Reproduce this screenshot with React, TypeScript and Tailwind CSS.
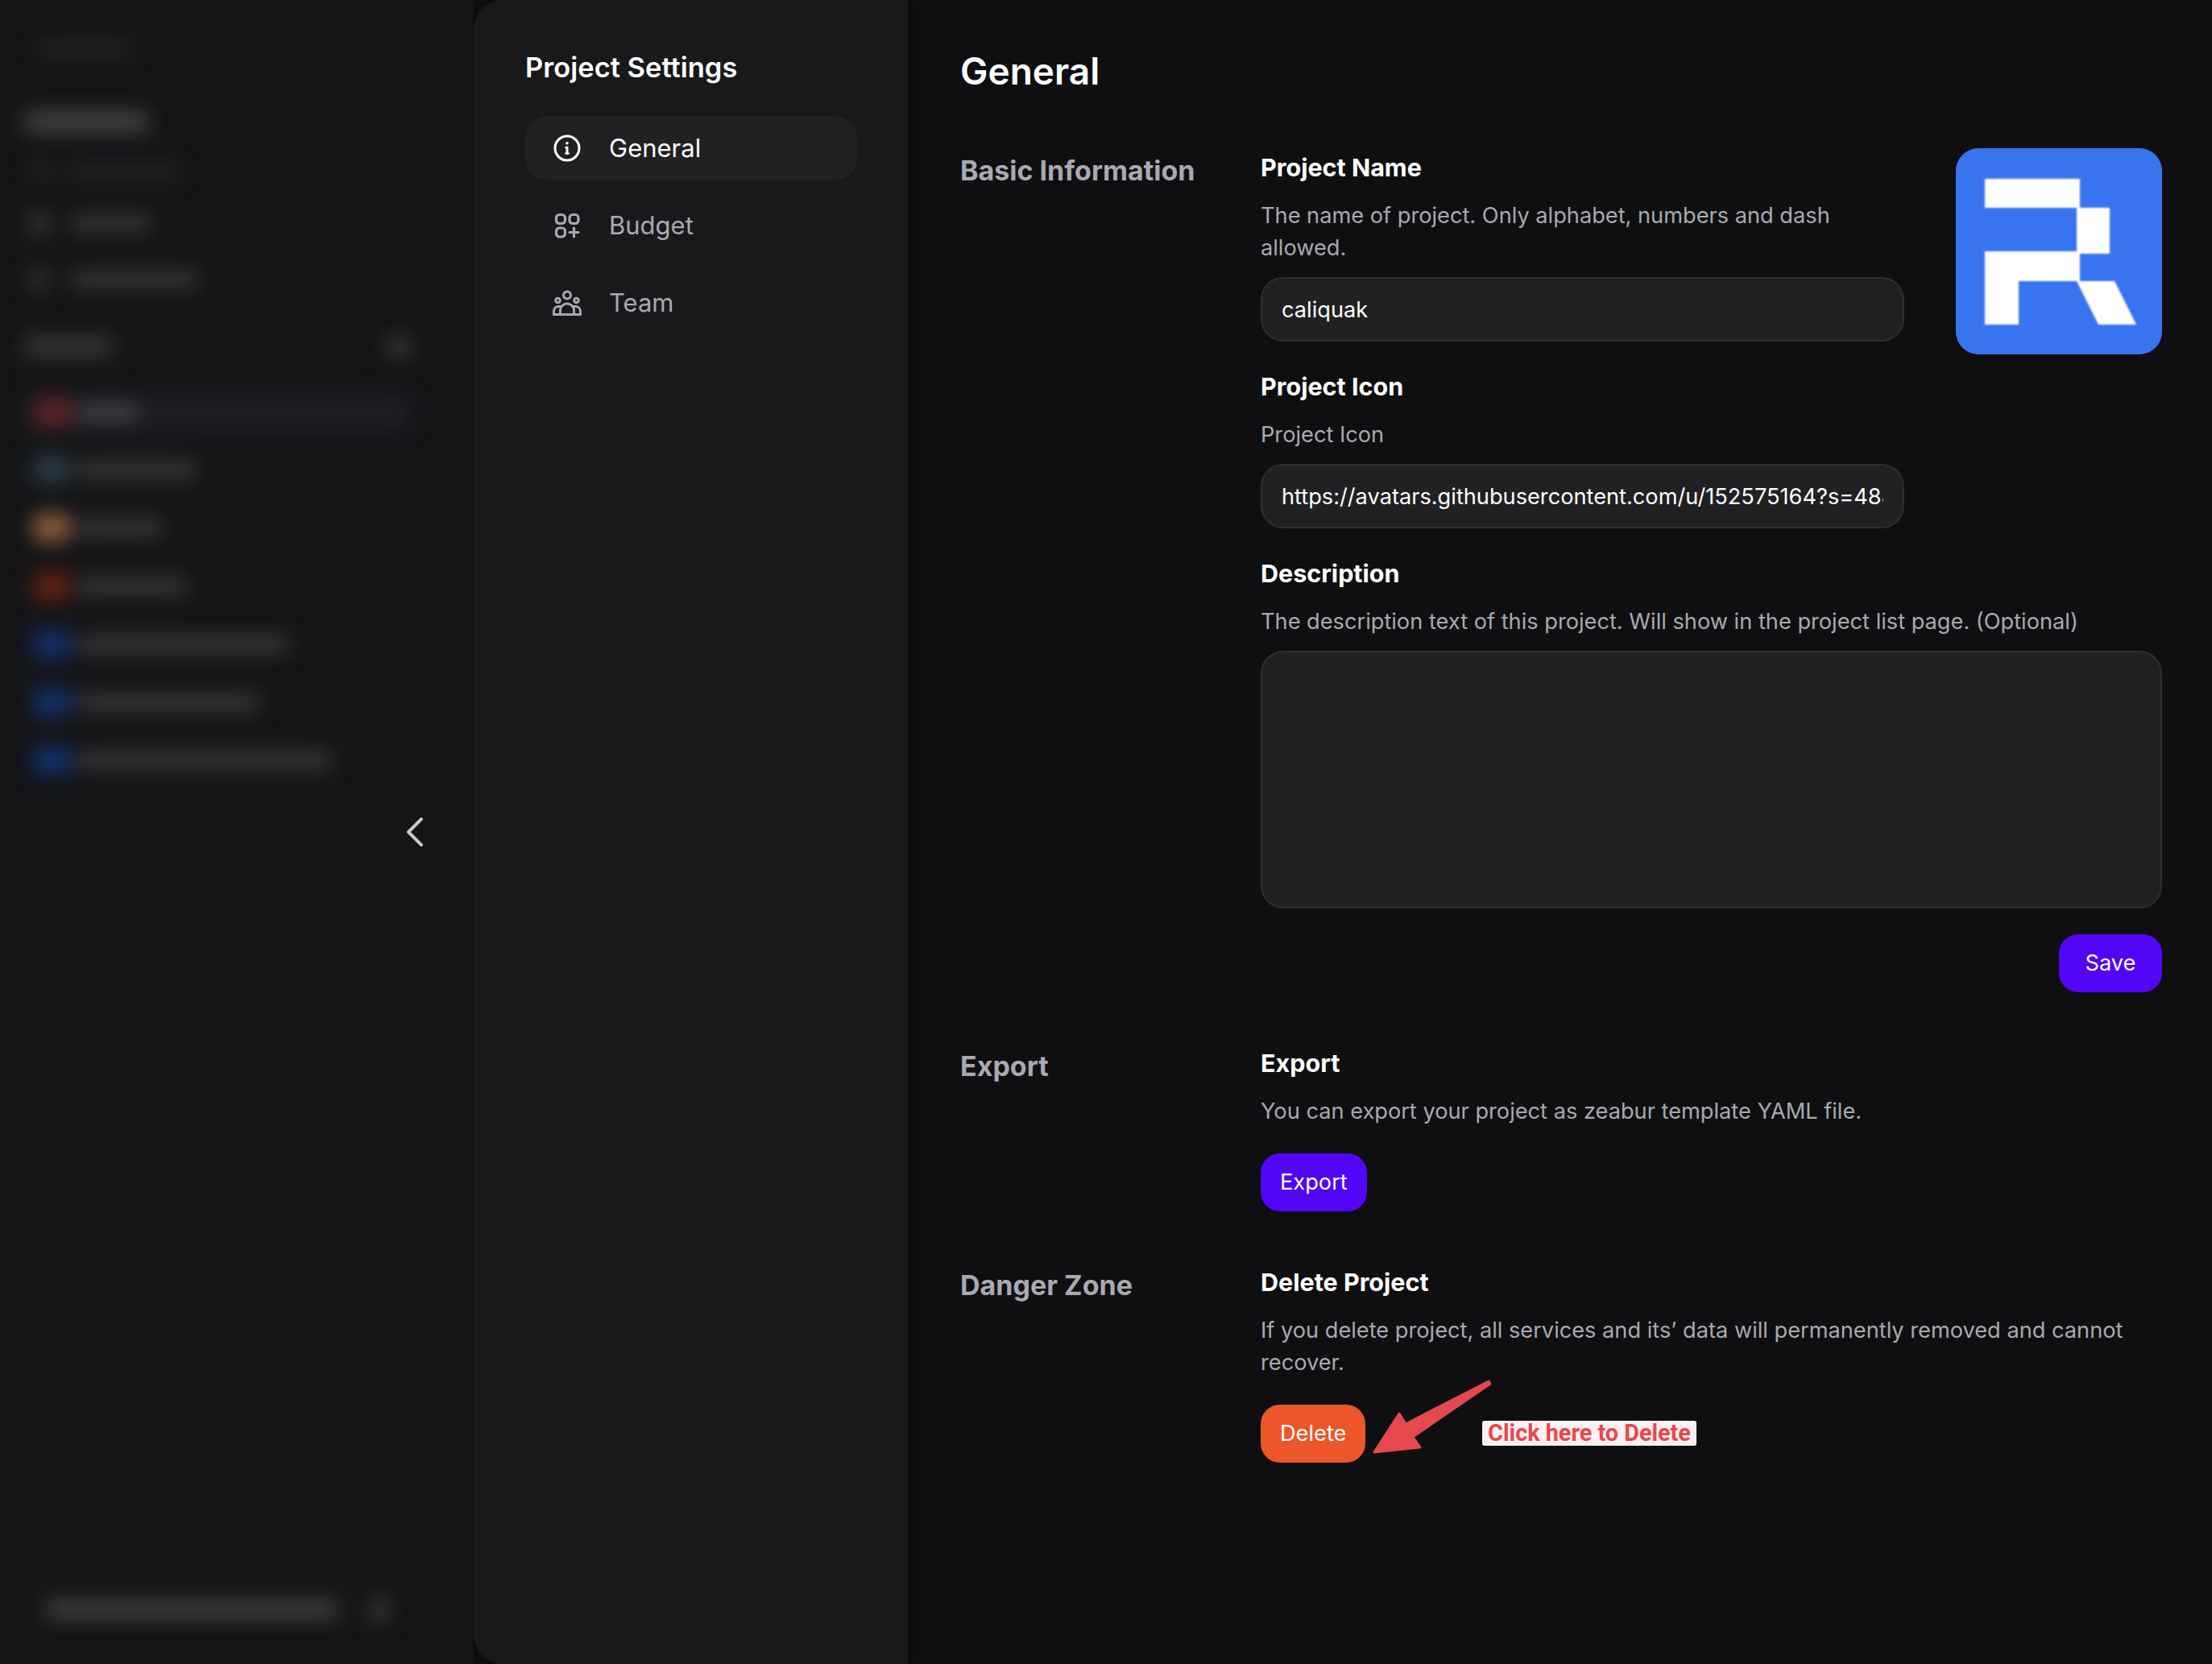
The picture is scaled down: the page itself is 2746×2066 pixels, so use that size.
import React from "react";

const font = { fontFamily: "Inter, 'Liberation Sans', sans-serif" };

function Row({ icon, text, w, cls = "", mt }: { icon: string; text: string; w: string; cls?: string; mt: string }) {
  return (
    <div className={`flex items-center gap-[8px] pl-[40px] ${mt} ${cls}`}>
      <div className={`h-[36px] w-[48px] rounded-[10px] ${icon}`} />
      <div className={`h-[24px] rounded-[6px] ${text} ${w}`} />
    </div>
  );
}

function Sidebar() {
  return (
    <div className="relative h-full w-[588px] shrink-0 bg-[#131416]">
      <div className="flex h-full flex-col pb-[52px] blur-[12px]">
        <div className="ml-[46px] mt-[52px] h-[16px] w-[118px] rounded-[4px] bg-[#272728]" />
        <div className="ml-[30px] mt-[69px] h-[28px] w-[155px] rounded-[4px] bg-[#404042]" />
        <div className="ml-[40px] mt-[38px] flex items-center gap-[20px]">
          <div className="h-[20px] w-[24px] rounded-[4px] bg-[#2c2522]" />
          <div className="h-[16px] w-[140px] rounded-[4px] bg-[#262628]" />
        </div>
        <div className="ml-[36px] mt-[40px] flex items-center gap-[26px]">
          <div className="h-[28px] w-[26px] rounded-[4px] bg-[#363637]" />
          <div className="h-[22px] w-[100px] rounded-[4px] bg-[#363638]" />
        </div>
        <div className="ml-[36px] mt-[43px] flex items-center gap-[28px]">
          <div className="h-[26px] w-[24px] rounded-[4px] bg-[#323234]" />
          <div className="h-[22px] w-[158px] rounded-[4px] bg-[#363638]" />
        </div>
        <div className="ml-[30px] mr-[78px] mt-[56px] flex items-center justify-between">
          <div className="h-[26px] w-[110px] rounded-[4px] bg-[#363638]" />
          <div className="h-[28px] w-[30px] rounded-[6px] bg-[#363638]" />
        </div>
        <div className="mx-[34px] mt-[45px] flex h-[46px] w-[476px] items-center gap-[8px] rounded-[8px] bg-[#1e1e24] pl-[8px]">
          <div className="h-[36px] w-[48px] rounded-[10px] bg-[#5e2327]" />
          <div className="h-[24px] w-[72px] rounded-[6px] bg-[#3e3e44]" />
        </div>
        <Row mt="mt-[30px]" icon="bg-[#2a3a46]" text="bg-[#363638]" w="w-[148px]" />
        <Row mt="mt-[36px]" icon="bg-[#8a5a3c]" text="bg-[#363638]" w="w-[106px]" />
        <Row mt="mt-[37px]" icon="bg-[#5f2210]" text="bg-[#363638]" w="w-[136px]" />
        <Row mt="mt-[36px]" icon="bg-[#13306a]" text="bg-[#363638]" w="w-[262px]" />
        <Row mt="mt-[36px]" icon="bg-[#13306a]" text="bg-[#363638]" w="w-[226px]" />
        <Row mt="mt-[36px]" icon="bg-[#13306a]" text="bg-[#363638]" w="w-[316px]" />
        <div className="ml-[56px] mt-auto flex items-center gap-[38px]">
          <div className="h-[28px] w-[364px] rounded-[6px] bg-[#3b3b3d]" />
          <div className="h-[32px] w-[26px] rounded-[6px] bg-[#343436]" />
        </div>
      </div>
      <svg className="absolute left-[502px] top-[1015px]" width="26" height="36" viewBox="0 0 26 36" fill="none">
        <path d="M21 2 5 18l16 16" stroke="#c9c9ce" strokeWidth="4" strokeLinecap="round" strokeLinejoin="round" />
      </svg>
    </div>
  );
}

function NavItem({ active, icon, label }: { active?: boolean; icon: React.ReactNode; label: string }) {
  return (
    <div className={`flex h-[80px] items-center gap-[34px] rounded-[28px] pl-[34px] ${active ? "bg-[#212123] text-white" : "text-[#a9a9b2]"}`}>
      <div className="h-[36px] w-[36px] shrink-0">{icon}</div>
      <span className="text-[31px] leading-[40px]">{label}</span>
    </div>
  );
}

const InfoIcon = (
  <svg width="36" height="36" viewBox="0 0 36 36" fill="none" stroke="currentColor" strokeWidth="3" strokeLinecap="round">
    <circle cx="18" cy="18" r="15" />
    <path d="M18 17v7.5" strokeWidth="3" />
    <circle cx="18" cy="11.8" r="1.8" fill="currentColor" stroke="none" />
    <path d="M16 17h2M16 24.5h4" strokeWidth="2" />
  </svg>
);

const BudgetIcon = (
  <svg width="36" height="36" viewBox="0 0 36 36" fill="none" stroke="currentColor" strokeWidth="3.2" strokeLinecap="round">
    <rect x="4.5" y="4.5" width="11" height="11" rx="4" />
    <rect x="21" y="4.5" width="11" height="11" rx="4" />
    <rect x="4.5" y="21" width="11" height="11" rx="4" />
    <path d="M26.5 21v11M21 26.5h11" />
  </svg>
);

const TeamIcon = (
  <svg width="36" height="36" viewBox="0 0 36 36" fill="none" stroke="currentColor" strokeWidth="3" strokeLinecap="round" strokeLinejoin="round">
    <circle cx="18" cy="8.5" r="4.5" />
    <circle cx="6.5" cy="15" r="2.8" />
    <circle cx="29.5" cy="15" r="2.8" />
    <path d="M1.5 32.5v-4.5a6 6 0 0 1 6-5.5h3M34.5 32.5v-4.5a6 6 0 0 0-6-5.5h-3" />
    <path d="M9.5 32.5v-5a8.5 8.5 0 0 1 17 0v5" />
    <path d="M1.5 32.5h33" />
  </svg>
);

function SettingsNav() {
  return (
    <div className="h-full w-[539px] shrink-0 rounded-l-[36px] bg-[#19191b] px-[64px] shadow-[-14px_0_24px_rgba(0,0,0,0.25)]">
      <h2 className="mt-[64px] text-[34.5px] font-semibold leading-[40px] text-white">Project Settings</h2>
      <div className="mt-[40px] flex w-[412px] flex-col gap-[16px]">
        <NavItem active icon={InfoIcon} label="General" />
        <NavItem icon={BudgetIcon} label="Budget" />
        <NavItem icon={TeamIcon} label="Team" />
      </div>
    </div>
  );
}

function Heading({ children }: { children: React.ReactNode }) {
  return <h4 className="text-[30.5px] font-bold leading-[40px] text-white">{children}</h4>;
}

function Sub({ children }: { children: React.ReactNode }) {
  return <p className="mt-[20px] text-[27.2px] leading-[40px] text-[#a9a9b2]">{children}</p>;
}

function Field({ value }: { value: string }) {
  return (
    <input
      readOnly
      value={value}
      className="mt-[16px] block h-[80px] w-full rounded-[28px] border-2 border-[#2e2e33] bg-[#212123] px-[24px] text-[27.2px] text-white outline-none"
    />
  );
}

function SectionLabel({ children }: { children: React.ReactNode }) {
  return <h3 className="w-[373px] shrink-0 text-[34px] font-bold leading-[48px] text-[#a9a9b2]">{children}</h3>;
}

function Btn({ children, color, wide }: { children: React.ReactNode; color: string; wide?: boolean }) {
  return (
    <button className={`flex h-[72px] items-center justify-center rounded-[24px] text-[27.2px] leading-[40px] text-white ${wide ? "w-[128px]" : "px-[24px]"} ${color}`}>
      {children}
    </button>
  );
}

function Logo() {
  return (
    <div className="-mt-[4px] h-[256px] w-[256px] shrink-0 overflow-hidden rounded-[28px] bg-[#3974f0]">
      <svg width="256" height="256" viewBox="0 0 256 256" className="blur-[0.8px]">
        <path
          fill="#fff"
          d="M36 38h118v36h37v57h-37v34h43l27 54h-47l-27-54H78v54H36v-91h114v-54H36z"
        />
      </svg>
    </div>
  );
}

function Annotation() {
  return (
    <>
      <svg className="absolute left-[139px] top-[-32px]" width="150" height="100" viewBox="0 0 150 100" fill="#e5484d" stroke="#e5484d" strokeWidth="3" strokeLinejoin="round">
        <path d="M144 3 41 56 33 43 2 91 59 85 50 72 146 6z" />
      </svg>
      <div className="absolute left-[275px] top-[20px] flex h-[31px] w-[266px] items-center justify-center rounded-[3px] bg-[#fdf0f1] text-[28.8px] font-bold leading-none text-[#e5484d]" style={{ fontFamily: "Roboto, sans-serif" }}>
        Click here to Delete
      </div>
    </>
  );
}

function Main() {
  return (
    <div className="h-full min-w-0 flex-1 pl-[65px] pr-[62px]">
      <h1 className="mt-[60px] text-[46px] font-semibold leading-[56px] text-white">General</h1>

      <section className="mt-[72px] flex">
        <SectionLabel>Basic Information</SectionLabel>
        <div className="min-w-0 flex-1">
          <div className="flex justify-between">
            <div className="w-[799px]">
              <Heading>Project Name</Heading>
              <Sub>The name of project. Only alphabet, numbers and dash allowed.</Sub>
              <Field value="caliquak" />
              <div className="mt-[36px]">
                <Heading>Project Icon</Heading>
              </div>
              <Sub>Project Icon</Sub>
              <Field value="https://avatars.githubusercontent.com/u/152575164?s=488&v=4" />
            </div>
            <Logo />
          </div>
          <div className="mt-[36px]">
            <Heading>Description</Heading>
          </div>
          <Sub>The description text of this project. Will show in the project list page. (Optional)</Sub>
          <div className="mt-[16px] h-[320px] rounded-[28px] border-2 border-[#2e2e33] bg-[#212123]" />
          <div className="mt-[32px] flex justify-end">
            <Btn wide color="bg-[#5206f5]">Save</Btn>
          </div>
        </div>
      </section>

      <section className="mt-[68px] flex">
        <SectionLabel>Export</SectionLabel>
        <div className="min-w-0 flex-1">
          <Heading>Export</Heading>
          <Sub>You can export your project as zeabur template YAML file.</Sub>
          <div className="mt-[32px] flex">
            <Btn color="bg-[#5206f5]">Export</Btn>
          </div>
        </div>
      </section>

      <section className="mt-[68px] flex">
        <SectionLabel>Danger Zone</SectionLabel>
        <div className="min-w-0 flex-1">
          <Heading>Delete Project</Heading>
          <Sub>If you delete project, all services and its’ data will permanently removed and cannot recover.</Sub>
          <div className="relative mt-[32px] flex">
            <Btn color="bg-[#ec5628]">Delete</Btn>
            <Annotation />
          </div>
        </div>
      </section>
    </div>
  );
}

export default function App() {
  return (
    <div className="flex h-[2066px] w-[2746px] overflow-hidden bg-[#0f0f11]" style={font}>
      <Sidebar />
      <SettingsNav />
      <Main />
    </div>
  );
}
